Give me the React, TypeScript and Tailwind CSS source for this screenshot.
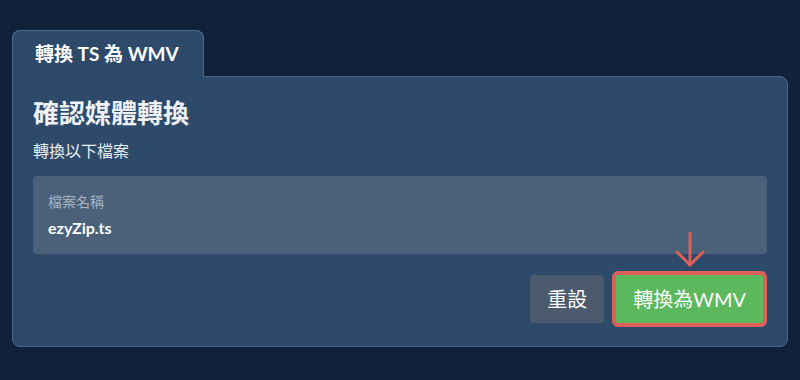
export default function App() {
  return (
    <div
      className="w-[800px] h-[380px] bg-[#10223a] pt-[30px] px-3"
      style={{ fontFamily: 'Lato, "Noto Sans CJK TC", sans-serif' }}
    >
      {/* Tab */}
      <div className="relative z-10 -mb-px w-[192px] h-[47px] bg-[#2d4a6b] border border-b-0 border-[#4d6a8c] rounded-t-lg pl-[22px] pt-[10px]">
        <span className="text-white text-[19px] font-bold leading-[26px]">轉換 TS 為 WMV</span>
      </div>

      {/* Panel */}
      <div className="w-[776px] bg-[#2d4a6b] border border-[#4d6a8c] rounded-lg rounded-tl-none px-5 pt-5 pb-[19px]">
        <h2 className="text-[26px] font-bold leading-[32px] text-[#eef1f5]">確認媒體轉換</h2>
        <p className="mt-[10px] text-[16px] leading-[24px] text-[#e8edf2]">轉換以下檔案</p>

        <div className="mt-[13px] bg-[#4b6079] rounded px-[15px] pt-4 pb-[14px]">
          <div className="text-[14px] leading-[20px] text-[#a7b3c1]">檔案名稱</div>
          <div className="mt-1 text-[16px] leading-[24px] font-bold text-white">ezyZip.ts</div>
        </div>

        <div className="mt-[17px] flex justify-end items-center gap-2">
          <button className="h-[48px] px-[17px] bg-[#4b5b6d] rounded text-[20px] text-white">
            重設
          </button>
          <div className="relative">
            <svg
              className="absolute left-1/2 -translate-x-1/2 -top-[40px]"
              width="32"
              height="38"
              viewBox="0 0 32 38"
              fill="none"
              stroke="#dc5f5a"
              strokeWidth="3"
              strokeLinecap="round"
              strokeLinejoin="round"
            >
              <path d="M16 2 V34" />
              <path d="M3 21 L16 34 L29 21" />
            </svg>
            <button className="h-[56px] px-[17px] bg-[#5cb85c] border-4 border-[#dc5f5a] rounded-md text-[20px] text-white">
              轉換為WMV
            </button>
          </div>
        </div>
      </div>
    </div>
  );
}
